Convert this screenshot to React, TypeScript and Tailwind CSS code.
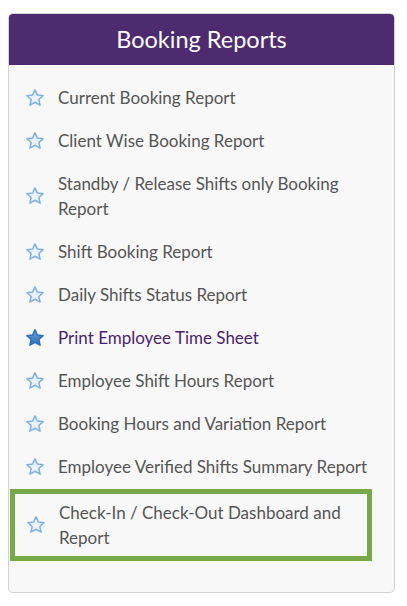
import React from 'react';

const reports = [
    { label: 'Current Booking Report' },
    { label: 'Client Wise Booking Report' },
    { label: 'Standby / Release Shifts only Booking Report' },
    { label: 'Shift Booking Report' },
    { label: 'Daily Shifts Status Report' },
    { label: 'Print Employee Time Sheet', active: true },
    { label: 'Employee Shift Hours Report' },
    { label: 'Booking Hours and Variation Report' },
    { label: 'Employee Verified Shifts Summary Report' },
    { label: 'Check-In / Check-Out Dashboard and Report', highlighted: true },
];

const Star = ({ active }: { active?: boolean }) => (
    <svg width="20" height="20" viewBox="0 0 24 24" className="shrink-0">
        <defs>
            <linearGradient id="starOn" x1="0" y1="0" x2="0" y2="1">
                <stop offset="0" stopColor="#6aa6e0" />
                <stop offset="1" stopColor="#2f6fb5" />
            </linearGradient>
        </defs>
        <path
            d="M12 2.2l2.9 6.3 6.9.7-5.2 4.6 1.5 6.8L12 17.1l-6.1 3.5 1.5-6.8-5.2-4.6 6.9-.7z"
            fill={active ? 'url(#starOn)' : '#eaf3fc'}
            stroke={active ? '#2f6fb5' : '#7fb0e6'}
            strokeWidth="1.8"
            strokeLinejoin="round"
        />
    </svg>
);

export default function App() {
    return (
        <div className="w-[407px] h-[606px] bg-white pt-[13px] pl-[8px]" style={{ fontFamily: 'Lato, "Open Sans", sans-serif' }}>
            <div className="w-[387px] rounded-[5px] border border-[#d2d2d2] bg-[#f8f8f8] overflow-hidden">
                {/* Header */}
                <div className="h-[51px] bg-[#4e2a6e] flex items-center justify-center">
                    <h1 className="text-white text-[23.5px] leading-none">Booking Reports</h1>
                </div>

                {/* Report list */}
                <ul className="pt-[11px] pb-[31px]">
                    {reports.map((r) =>
                        r.highlighted ? (
                            <li key={r.label} className="ml-[1px] mt-[1px] w-[362px] border-[5px] border-[#77a84a] flex items-center gap-[13px] pl-[11px] py-[6px]">
                                <Star active={r.active} />
                                <span className="text-[17px] leading-[25px] text-[#555] w-[300px]">{r.label}</span>
                            </li>
                        ) : (
                            <li key={r.label} className="flex items-center gap-[13px] pl-[16px] py-[9px]">
                                <Star active={r.active} />
                                <span className={`text-[17px] leading-[25px] w-[330px] ${r.active ? 'text-[#4b1f6b]' : 'text-[#555]'}`}>
                                    {r.label}
                                </span>
                            </li>
                        )
                    )}
                </ul>
            </div>
        </div>
    );
}
